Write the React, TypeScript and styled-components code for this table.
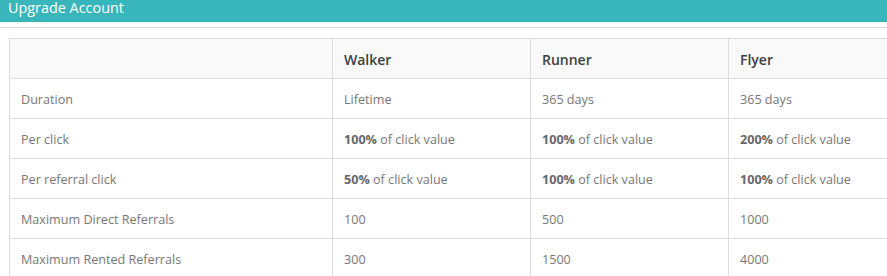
import React from "react";
import styled, { createGlobalStyle } from "styled-components";

const Global = createGlobalStyle`
  html, body { margin: 0; padding: 0; background: #fff; overflow: hidden; }
  body { font-family: "Open Sans", "Liberation Sans", sans-serif; }
`;

const Page = styled.div`
  width: 887px;
  overflow: hidden;
`;

const TitleBar = styled.div`
  height: 22px;
  background: #38b6bc;
  color: #fff;
  font-size: 14.4px;
  line-height: 15px;
  padding-left: 8px;
  box-sizing: border-box;
  white-space: nowrap;
`;

const Panel = styled.div`
  margin-top: 5px;
  border-top: 1px solid #dcdcdc;
  padding: 10px 0 0 9px;
`;

const Table = styled.table`
  border-collapse: collapse;
  table-layout: fixed;
  width: 1116px;
`;

const Col = styled.col<{ $w: number }>`
  width: ${(p) => p.$w}px;
`;

const Cell = styled.td`
  border: 1px solid #dddddd;
  height: 40px;
  padding: 2px 10px 0 11px;
  box-sizing: border-box;
  vertical-align: middle;
  white-space: nowrap;
  background: #fff;
  color: #777;
  font-size: 12.6px;
  font-weight: 400;
`;

const HeadCell = styled.th`
  border: 1px solid #dddddd;
  height: 40px;
  padding: 1px 10px 0 11px;
  box-sizing: border-box;
  vertical-align: middle;
  text-align: left;
  white-space: nowrap;
  background: #f9f9f9;
  color: #404040;
  font-size: 14px;
  font-weight: 600;
`;

const Strong = styled.b`
  font-weight: 700;
  color: #666;
`;

type V = React.ReactNode;
const pct = (n: string) => (
  <>
    <Strong>{n}</Strong> of click value
  </>
);

const plans = ["", "Walker", "Runner", "Flyer", ""];
const widths = [323, 198, 198, 198, 198];

const rows: [string, V, V, V][] = [
  ["Duration", "Lifetime", "365 days", "365 days"],
  ["Per click", pct("100%"), pct("100%"), pct("200%")],
  ["Per referral click", pct("50%"), pct("100%"), pct("100%")],
  ["Maximum Direct Referrals", "100", "500", "1000"],
  ["Maximum Rented Referrals", "300", "1500", "4000"],
];

export default function App() {
  return (
    <Page>
      <Global />
      <TitleBar>Upgrade Account</TitleBar>
      <Panel>
        <Table>
          <colgroup>
            {widths.map((w, i) => (
              <Col key={i} $w={w} />
            ))}
          </colgroup>
          <thead>
            <tr>
              {plans.map((p, i) => (
                <HeadCell key={i}>{p}</HeadCell>
              ))}
            </tr>
          </thead>
          <tbody>
            {rows.map((r) => (
              <tr key={r[0]}>
                <Cell>{r[0]}</Cell>
                <Cell>{r[1]}</Cell>
                <Cell>{r[2]}</Cell>
                <Cell>{r[3]}</Cell>
                <Cell />
              </tr>
            ))}
          </tbody>
        </Table>
      </Panel>
    </Page>
  );
}
